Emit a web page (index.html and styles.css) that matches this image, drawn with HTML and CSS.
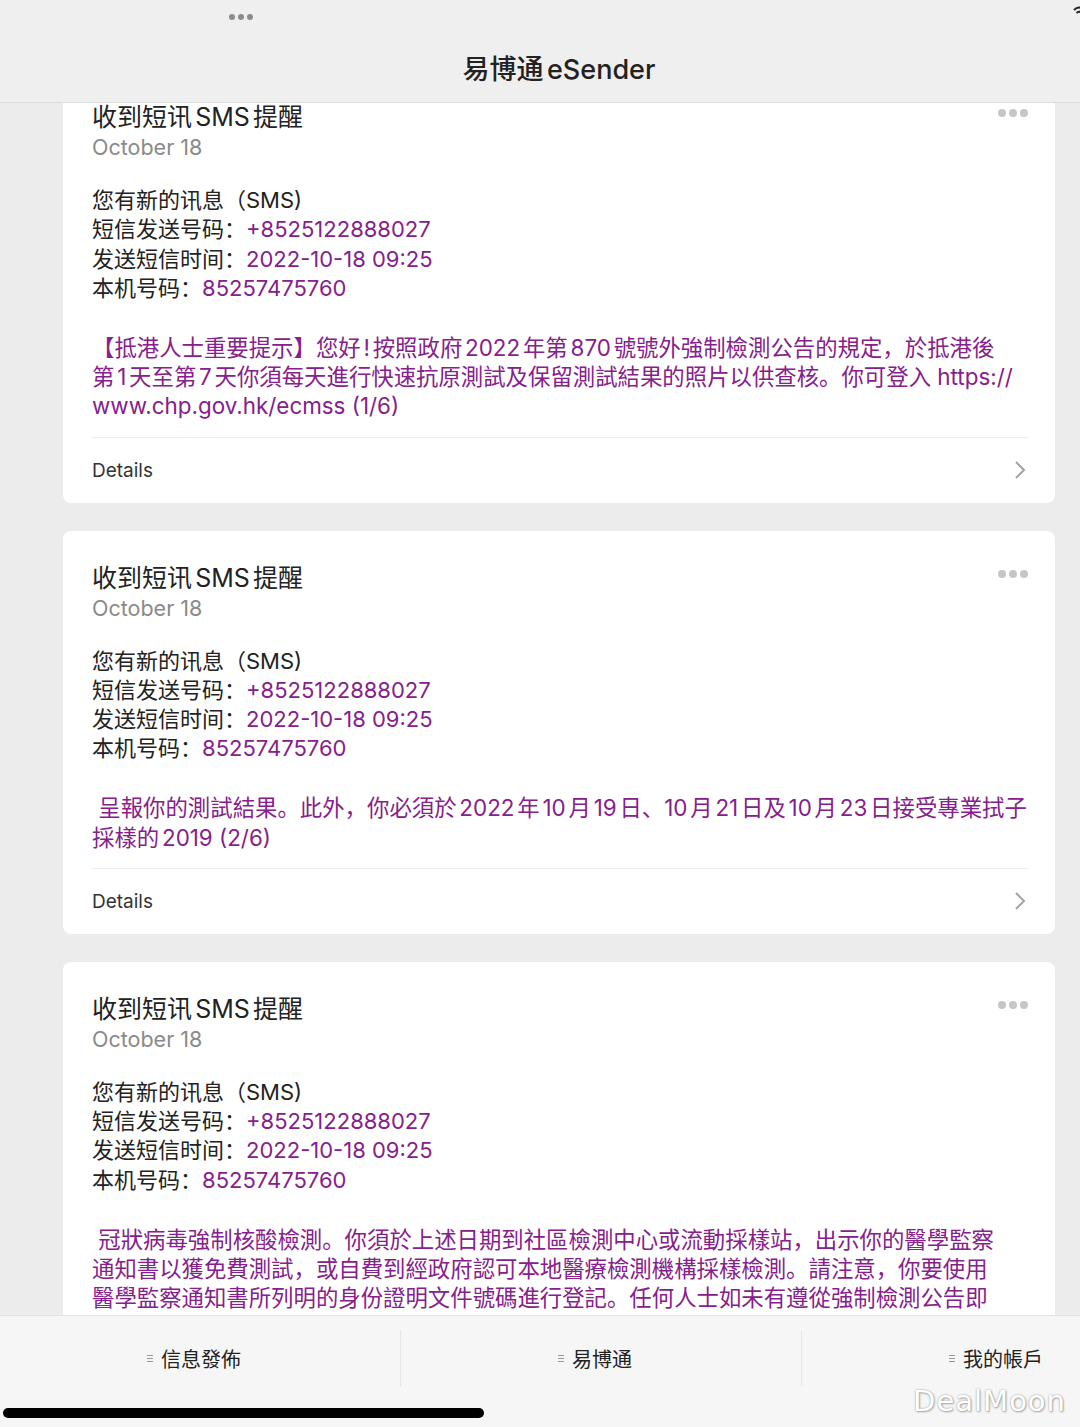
FILE: index.html
```html
<!DOCTYPE html>
<html lang="zh-CN">
<head>
  <meta charset="UTF-8" />
  <meta name="viewport" content="width=device-width, initial-scale=1.0" />
  <title>易博通 eSender</title>
  <link rel="stylesheet" href="styles.css">
</head>

<body>
  <div class="app">
    <header class="topBar">
      <span class="statusDots"><i></i><i></i><i></i></span>
      <svg class="wifi" width="14" height="14" viewBox="0 0 14 14">
        <path d="M2 6 Q7 1 12 6" fill="none" stroke="#222" stroke-width="2"/>
        <path d="M4.5 9 Q7 6.5 9.5 9" fill="none" stroke="#222" stroke-width="2"/>
      </svg>
      <h1>易博通eSender</h1>
    </header>

    <main class="feed">
      <div class="feedInner">

        <div class="card">
          <div class="cardHead">
            <div>
              <h2 class="title">收到短讯SMS提醒</h2>
              <div class="date">October 18</div>
            </div>
            <span class="more"><i></i><i></i><i></i></span>
          </div>
          <div class="info">
            <div>您有新的讯息（SMS)</div>
            <div>短信发送号码：<span class="val">+8525122888027</span></div>
            <div>发送短信时间：<span class="val">2022-10-18 09:25</span></div>
            <div>本机号码：<span class="val">85257475760</span></div>
          </div>
          <p class="msg">【抵港人士重要提示】您好!按照政府2022年第870號號外強制檢測公告的規定，於抵港後<br>第1天至第7天你須每天進行快速抗原測試及保留測試結果的照片以供查核。你可登入 https://<br>www.chp.gov.hk/ecmss (1/6)</p>
          <div class="cardFoot">
            <span>Details</span>
            <svg width="12" height="20" viewBox="0 0 12 20"><polyline points="2,2 10,10 2,18" fill="none" stroke="#a3a3a3" stroke-width="2"/></svg>
          </div>
        </div>

        <div class="card">
          <div class="cardHead">
            <div>
              <h2 class="title">收到短讯SMS提醒</h2>
              <div class="date">October 18</div>
            </div>
            <span class="more"><i></i><i></i><i></i></span>
          </div>
          <div class="info">
            <div>您有新的讯息（SMS)</div>
            <div>短信发送号码：<span class="val">+8525122888027</span></div>
            <div>发送短信时间：<span class="val">2022-10-18 09:25</span></div>
            <div>本机号码：<span class="val">85257475760</span></div>
          </div>
          <p class="msg">&nbsp;呈報你的測試結果。此外，你必須於2022年10月19日、10月21日及10月23日接受專業拭子<br>採樣的2019 (2/6)</p>
          <div class="cardFoot">
            <span>Details</span>
            <svg width="12" height="20" viewBox="0 0 12 20"><polyline points="2,2 10,10 2,18" fill="none" stroke="#a3a3a3" stroke-width="2"/></svg>
          </div>
        </div>

        <!-- last card runs under the tab bar -->
        <div class="card cardCut">
          <div class="cardHead">
            <div>
              <h2 class="title">收到短讯SMS提醒</h2>
              <div class="date">October 18</div>
            </div>
            <span class="more"><i></i><i></i><i></i></span>
          </div>
          <div class="info">
            <div>您有新的讯息（SMS)</div>
            <div>短信发送号码：<span class="val">+8525122888027</span></div>
            <div>发送短信时间：<span class="val">2022-10-18 09:25</span></div>
            <div>本机号码：<span class="val">85257475760</span></div>
          </div>
          <p class="msg">&nbsp;冠狀病毒強制核酸檢測。你須於上述日期到社區檢測中心或流動採樣站，出示你的醫學監察<br>通知書以獲免費測試，或自費到經政府認可本地醫療檢測機構採樣檢測。請注意，你要使用<br>醫學監察通知書所列明的身份證明文件號碼進行登記。任何人士如未有遵從強制檢測公告即</p>
        </div>

      </div>
    </main>

    <nav class="tabBar">
      <div class="tabs">
        <div class="tab"><span class="menuIcon"><i></i><i></i><i></i></span>信息發佈</div>
        <div class="tab"><span class="menuIcon"><i></i><i></i><i></i></span>易博通</div>
        <div class="tab"><span class="menuIcon"><i></i><i></i><i></i></span>我的帳戶</div>
      </div>
      <div class="homeBar"></div>
      <span class="watermark">DealMoon</span>
    </nav>
  </div>
</body>
</html>
```

FILE: styles.css
```css
* {
  box-sizing: border-box;
  margin: 0;
  padding: 0;
}

body {
  font-family: Inter, "Noto Sans CJK SC", sans-serif;
  background-color: #ececec;
  color: #222;
  width: 1080px;
  height: 1427px;
  overflow: hidden;
  text-autospace: normal;
}

.app {
  display: flex;
  flex-direction: column;
  height: 1427px;
}

/* top navigation */
.topBar {
  position: relative;
  height: 103px;
  flex-shrink: 0;
  background-color: #efefef;
  border-bottom: 1px solid #dcdcdc;
  display: flex;
  align-items: center;
  justify-content: center;
  padding-top: 33px;
  z-index: 2;
}

.topBar h1 {
  font-size: 27px;
  font-weight: 500;
  color: #222;
  margin-left: 38px;
}

.statusDots {
  position: absolute;
  top: 14px;
  left: 229px;
  display: flex;
  gap: 3px;
}

.statusDots i {
  display: block;
  width: 6px;
  height: 6px;
  border-radius: 50%;
  background-color: #8c8c8c;
}

.wifi {
  position: absolute;
  top: 4px;
  right: -6px;
}

/* scrolling feed */
.feed {
  flex: 1;
  overflow: hidden;
  padding: 0 25px 0 63px;
}

.feedInner {
  display: flex;
  flex-direction: column;
  gap: 28px;
  margin-top: -33px;
}

.card {
  background-color: #fff;
  border-radius: 8px;
  padding: 32px 27px 0 29px;
}

.cardCut {
  padding-bottom: 120px;
}

.cardHead {
  display: flex;
  justify-content: space-between;
  align-items: flex-start;
}

.title {
  font-size: 25px;
  font-weight: normal;
  line-height: 30px;
  color: #222;
}

.date {
  font-size: 21.5px;
  line-height: 30px;
  color: #8a8a8a;
}

.more {
  display: flex;
  gap: 3px;
  height: 30px;
  align-items: center;
  margin-top: -4px;
}

.more i {
  display: block;
  width: 8px;
  height: 8px;
  border-radius: 50%;
  background-color: #c6c6c6;
}

.info {
  margin-top: 24px;
  font-size: 22px;
  line-height: 29.3px;
  white-space: nowrap;
}

.val {
  color: #86208c;
}

.msg {
  margin-top: 29.5px;
  font-size: 22.4px;
  line-height: 29.3px;
  color: #86208c;
  white-space: nowrap;
}

.cardFoot {
  margin-top: 16px;
  height: 66px;
  border-top: 1px solid #efefef;
  display: flex;
  align-items: center;
  justify-content: space-between;
  font-size: 19px;
  color: #333;
  padding-right: 2px;
}

/* bottom tabs */
.tabBar {
  position: relative;
  height: 112px;
  flex-shrink: 0;
  background-color: #f6f6f6;
  border-top: 1px solid #e4e4e4;
  overflow: hidden;
  z-index: 2;
}

.tabs {
  display: flex;
  width: 1203px;
  padding-top: 14px;
}

.tab {
  width: 401px;
  height: 56px;
  display: flex;
  align-items: center;
  justify-content: center;
  font-size: 20px;
  color: #222;
  font-family: "Noto Sans CJK SC", sans-serif;
  border-right: 1px solid #e6e6e6;
  padding-right: 12px;
}

.menuIcon {
  display: flex;
  flex-direction: column;
  gap: 2px;
  margin-right: 8px;
}

.menuIcon i {
  display: block;
  width: 6px;
  height: 1px;
  background-color: #999;
}

.homeBar {
  position: absolute;
  left: 3px;
  top: 92px;
  width: 481px;
  height: 10px;
  border-radius: 5px;
  background-color: #000;
}

.watermark {
  position: absolute;
  right: 14px;
  top: 68px;
  font-family: "DejaVu Sans", sans-serif;
  font-size: 29px;
  letter-spacing: 1px;
  color: #fff;
  text-shadow: 0 0 2px #999, 1px 1px 2px #aaa;
}
```
